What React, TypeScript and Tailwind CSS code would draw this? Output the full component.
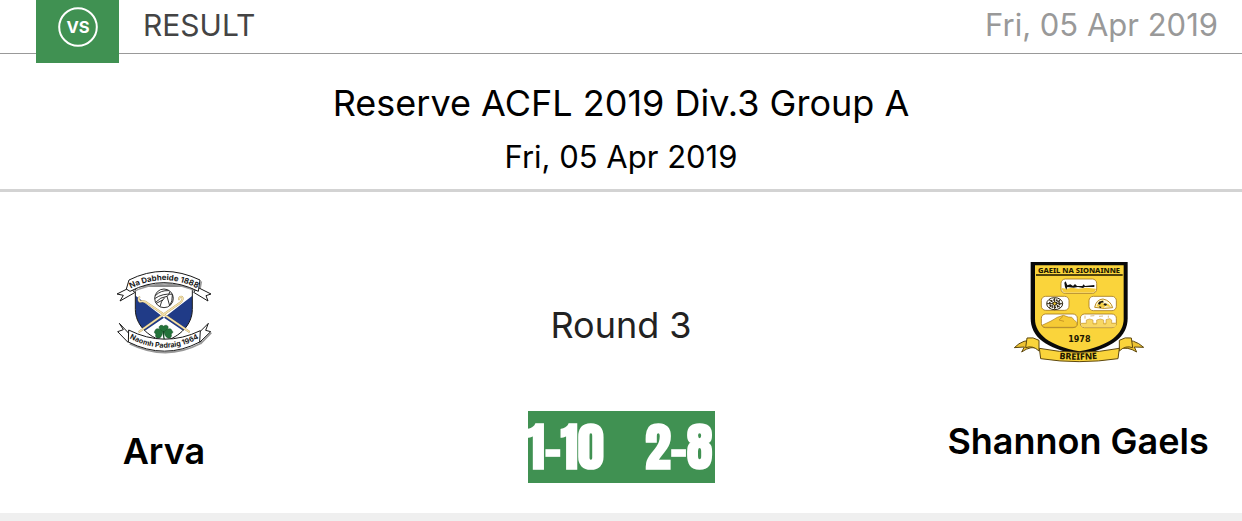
function VersusIcon() {
  return (
    <svg viewBox="0 0 40 40" className="size-10" role="img" aria-label="Versus">
      <circle cx="20" cy="20" r="18.8" fill="none" stroke="#fff" strokeWidth="2" />
      <text x="20" y="26" textAnchor="middle" fontSize="16.5" fontWeight="700" fill="#fff">VS</text>
    </svg>
  );
}

function ArvaCrest() {
  return (
    <svg viewBox="-3 0 360 300" className="h-[100px] w-[120px]" role="img" aria-label="Arva crest">
      <defs>
        <clipPath id="arva-shield">
          <path d="M91 72H262V142C262 188 225 224 177 238C128 224 91 188 91 142Z" />
        </clipPath>
        <path id="arva-top" d="M72 83Q176 26 283 82" />
        <path id="arva-bottom" d="M72 228Q180 286 283 228" />
      </defs>
      <g clipPath="url(#arva-shield)">
        <path fill="#fff" d="M88 68H266V246H88Z" />
        <path fill="#203b87" d="M88 98L177 167L88 228ZM266 98L177 167L266 228Z" />
      </g>
      <path d="M91 72H262V142C262 188 225 224 177 238C128 224 91 188 91 142Z" fill="none" stroke="#161616" strokeWidth="3" />
      <g fill="none" strokeLinecap="round" strokeLinejoin="round">
        <path stroke="#b39a5f" strokeWidth="6" d="M103 209L226 122Q237 110 231 105Q224 102 222 112M252 209L128 124Q118 115 105 119Q98 114 103 106" />
        <path stroke="#f5e2ab" strokeWidth="4" d="M103 209L226 122Q237 110 231 105Q224 102 222 112M252 209L128 124Q118 115 105 119Q98 114 103 106" />
      </g>
      <g fill="none" stroke="#222" strokeWidth="2.8">
        <circle cx="177" cy="109" r="28" fill="#fff" />
        <path d="M151 101Q168 84 191 86M149 110Q173 93 203 97M152 121Q166 105 186 103L194 131M165 134Q167 118 179 107M202 99Q203 118 194 131M194 89Q193 100 186 103M154 124L173 114" />
      </g>
      <g fill="#24733a" stroke="#164c27" strokeWidth="1.5">
        <path d="M176 211C160 203 159 192 168 190C174 189 176 193 176 193C181 187 192 190 189 199C188 204 181 207 176 211Z" />
        <path d="M174 210C166 199 153 197 150 206C146 211 149 215 153 215C148 225 158 232 165 227C170 224 172 216 174 210Z" />
        <path d="M177 210C186 199 198 197 201 206C206 210 202 215 198 215C203 225 193 232 187 227C181 224 178 216 177 210Z" />
        <path fill="none" strokeWidth="4" d="M176 207Q174 228 181 238" />
      </g>
      <g strokeLinejoin="round" strokeWidth="3">
        <g fill="none" stroke="#999" strokeWidth="5">
          <path d="M79 92Q179 40 283 92L289 58" />
          <path d="M74 245Q183 299 288 244L290 212M287 245L319 212" />
        </g>
        <g fill="#fff" stroke="#181818">
          <path d="M76 76L36 96L55 100L45 117L89 92ZM278 76L318 96L303 101L309 117L266 91Z" />
          <path d="M77 220L43 184L55 203L38 209L69 241ZM276 218L310 184L302 205L317 209L284 241Z" />
          <path d="M72 54Q176 2 285 54L280 88Q176 36 75 88L64 81Z" />
          <path d="M71 204Q178 258 286 206L284 240Q180 295 70 240Z" />
        </g>
      </g>
      <g fontWeight="700" fill="#171717" textAnchor="middle">
        <text fontSize="23.5"><textPath href="#arva-top" startOffset="50%">Na Dabheide 1888</textPath></text>
        <text fontSize="21.5"><textPath href="#arva-bottom" startOffset="50%">Naomh Padraig 1964</textPath></text>
      </g>
    </svg>
  );
}

function ShannonCrest() {
  return (
    <svg viewBox="-6 0 450 345" className="h-[115px] w-[150px]" role="img" aria-label="Shannon Gaels crest">
      <defs><path id="breifne-curve" d="M140 309Q222 320 300 308" /></defs>
      <path fill="#090909" d="M77 21H368V190C368 244 323 282 223 299C120 282 77 244 77 190Z" />
      <path fill="#fad43b" d="M90 31H356V192C356 237 314 272 223 289C132 272 90 237 90 192Z" />
      <path d="M93 60H353" stroke="#171300" strokeWidth="4" />
      <g fill="#fff" stroke="#a6791c" strokeWidth="2.5">
        <rect x="168" y="72" width="107" height="43" rx="13" />
        <rect x="109" y="124" width="83" height="42" rx="13" />
        <rect x="252" y="124" width="82" height="43" rx="13" />
        <rect x="109" y="177" width="108" height="41" rx="13" />
        <rect x="226" y="177" width="108" height="41" rx="13" />
      </g>
      <path fill="#f6cc38" d="M170 99L185 101L201 98L220 101L244 98L273 101L271 108Q269 113 262 113H181Q172 113 170 99Z" />
      <path fill="#111" d="M178 83L182 79L187 91L196 88L204 93L210 87L216 93L232 93L236 88L240 93L268 90V96L239 96L234 99L219 96L206 98L187 96L184 104L180 96Z" />
      <g fill="none" stroke="#302812" strokeWidth="3">
        <ellipse cx="149" cy="146" rx="24" ry="18" />
        <ellipse cx="149" cy="146" rx="15" ry="11" strokeWidth="5" strokeDasharray="5 3" />
        <path d="M149 129V163M126 146H173M132 134L167 158M132 158L167 134" />
        <circle cx="149" cy="146" r="5" fill="#fad43b" />
      </g>
      <path fill="#fff9da" stroke="#bd8d20" strokeWidth="3" d="M269 157Q274 133 294 132Q317 137 323 158Q299 163 269 157Z" />
      <path fill="#f5cf45" d="M274 154Q283 134 296 136L292 145L309 146L319 157L301 153L296 159Z" />
      <path fill="#161616" d="M282 140L293 137L297 142L288 143L285 149L279 147ZM299 145L306 147L303 152L295 150ZM282 154L290 156L285 160Z" />
      <path fill="#f6ca35" stroke="#a77b1c" strokeWidth="2" d="M111 211Q141 198 157 187L175 181L190 186L200 187L207 194L216 203V211Q215 217 206 217H120Q112 217 111 211Z" />
      <path fill="none" stroke="#ca9825" strokeWidth="3" d="M174 184L162 195L177 199" />
      <path fill="#f8d763" d="M228 204L244 203V195L254 192L264 195V203H275V195L286 192L296 195V203H303V194L314 191L320 195V203H333V211Q331 217 324 217H238Q228 216 228 204Z" />
      <path fill="none" stroke="#c99b3a" strokeWidth="2" d="M228 205H244V195L254 192L264 195V207H275V195L286 192L296 195V207H303V194L314 191L320 195V205H333M240 182V191M256 183L268 182M282 184L294 183M310 182V188" />
      <g fill="#edc333" stroke="#5e480f" strokeWidth="3" strokeLinejoin="round">
        <path d="M90 258Q55 250 28 278L58 276L50 291Q79 270 103 282ZM354 258Q386 250 416 277L388 276L395 291Q369 274 341 282Z" />
        <path fill="#fad43b" d="M66 249Q84 245 102 256V288Q83 270 62 278ZM379 249Q360 245 343 256V288Q362 270 383 278Z" />
        <path fill="#fad43b" d="M103 280Q223 304 343 280L339 311Q222 329 107 311Z" />
      </g>
      <g fontFamily="Noto Sans, sans-serif" fontWeight="800" fill="#201700" textAnchor="middle">
        <text x="222" y="54" fontSize="22.5">GAEIL NA SIONAINNE</text>
        <text x="223" y="261" fontFamily="DejaVu Sans, sans-serif" fontSize="24">1978</text>
        <text fontSize="27"><textPath href="#breifne-curve" startOffset="50%">BREIFNE</textPath></text>
      </g>
    </svg>
  );
}

export default function App() {
  return (
    <main className="bg-white font-['Inter',sans-serif] text-black">
      <header className="flex h-[54px] items-start border-b border-[#999] pl-9 pr-6">
        <div className="flex h-[63px] w-[83px] shrink-0 justify-center bg-[#409152] pt-[7px]">
          <VersusIcon />
        </div>
        <span className="ml-6 text-[30px] leading-[50px] text-[#444]">RESULT</span>
        <time dateTime="2019-04-05" className="ml-auto text-[31px] leading-[50px] text-[#999]">Fri, 05 Apr 2019</time>
      </header>

      <section className="border-b-[3px] border-[#d3d3d3] pb-[7px] pt-6 text-center">
        <h1 className="text-[36px] leading-[50px]">Reserve ACFL 2019 Div.3 Group A</h1>
        <p className="pt-1 text-[31px] leading-[50px]">Fri, 05 Apr 2019</p>
      </section>

      <section className="grid grid-cols-[26.4%_1fr_26.4%] border-b-8 border-[#efefef] pb-[30px] pt-[63px] text-center">
        <div className="flex flex-col items-center pt-[7px]">
          <ArvaCrest />
          <h2 className="mt-16 text-[36px] font-semibold leading-[50px]">Arva</h2>
        </div>
        <div className="flex flex-col items-center pt-[45px]">
          <p className="text-[36px] leading-[50px] text-[#222]">Round 3</p>
          <p className="mt-[61px] flex h-[72px] w-[187px] items-center justify-between whitespace-nowrap bg-[#409152] pr-0.5 font-['Impact','Anton','Roboto_Condensed','Liberation_Sans_Narrow','Liberation_Sans',sans-serif] text-[52px] font-black leading-[72px] text-white">
            <span>1-10</span>
            <span>2-8</span>
          </p>
        </div>
        <div className="flex flex-col items-center">
          <ShannonCrest />
          <h2 className="mt-[46px] whitespace-nowrap text-[36px] font-semibold leading-[50px]">Shannon Gaels</h2>
        </div>
      </section>
    </main>
  );
}
